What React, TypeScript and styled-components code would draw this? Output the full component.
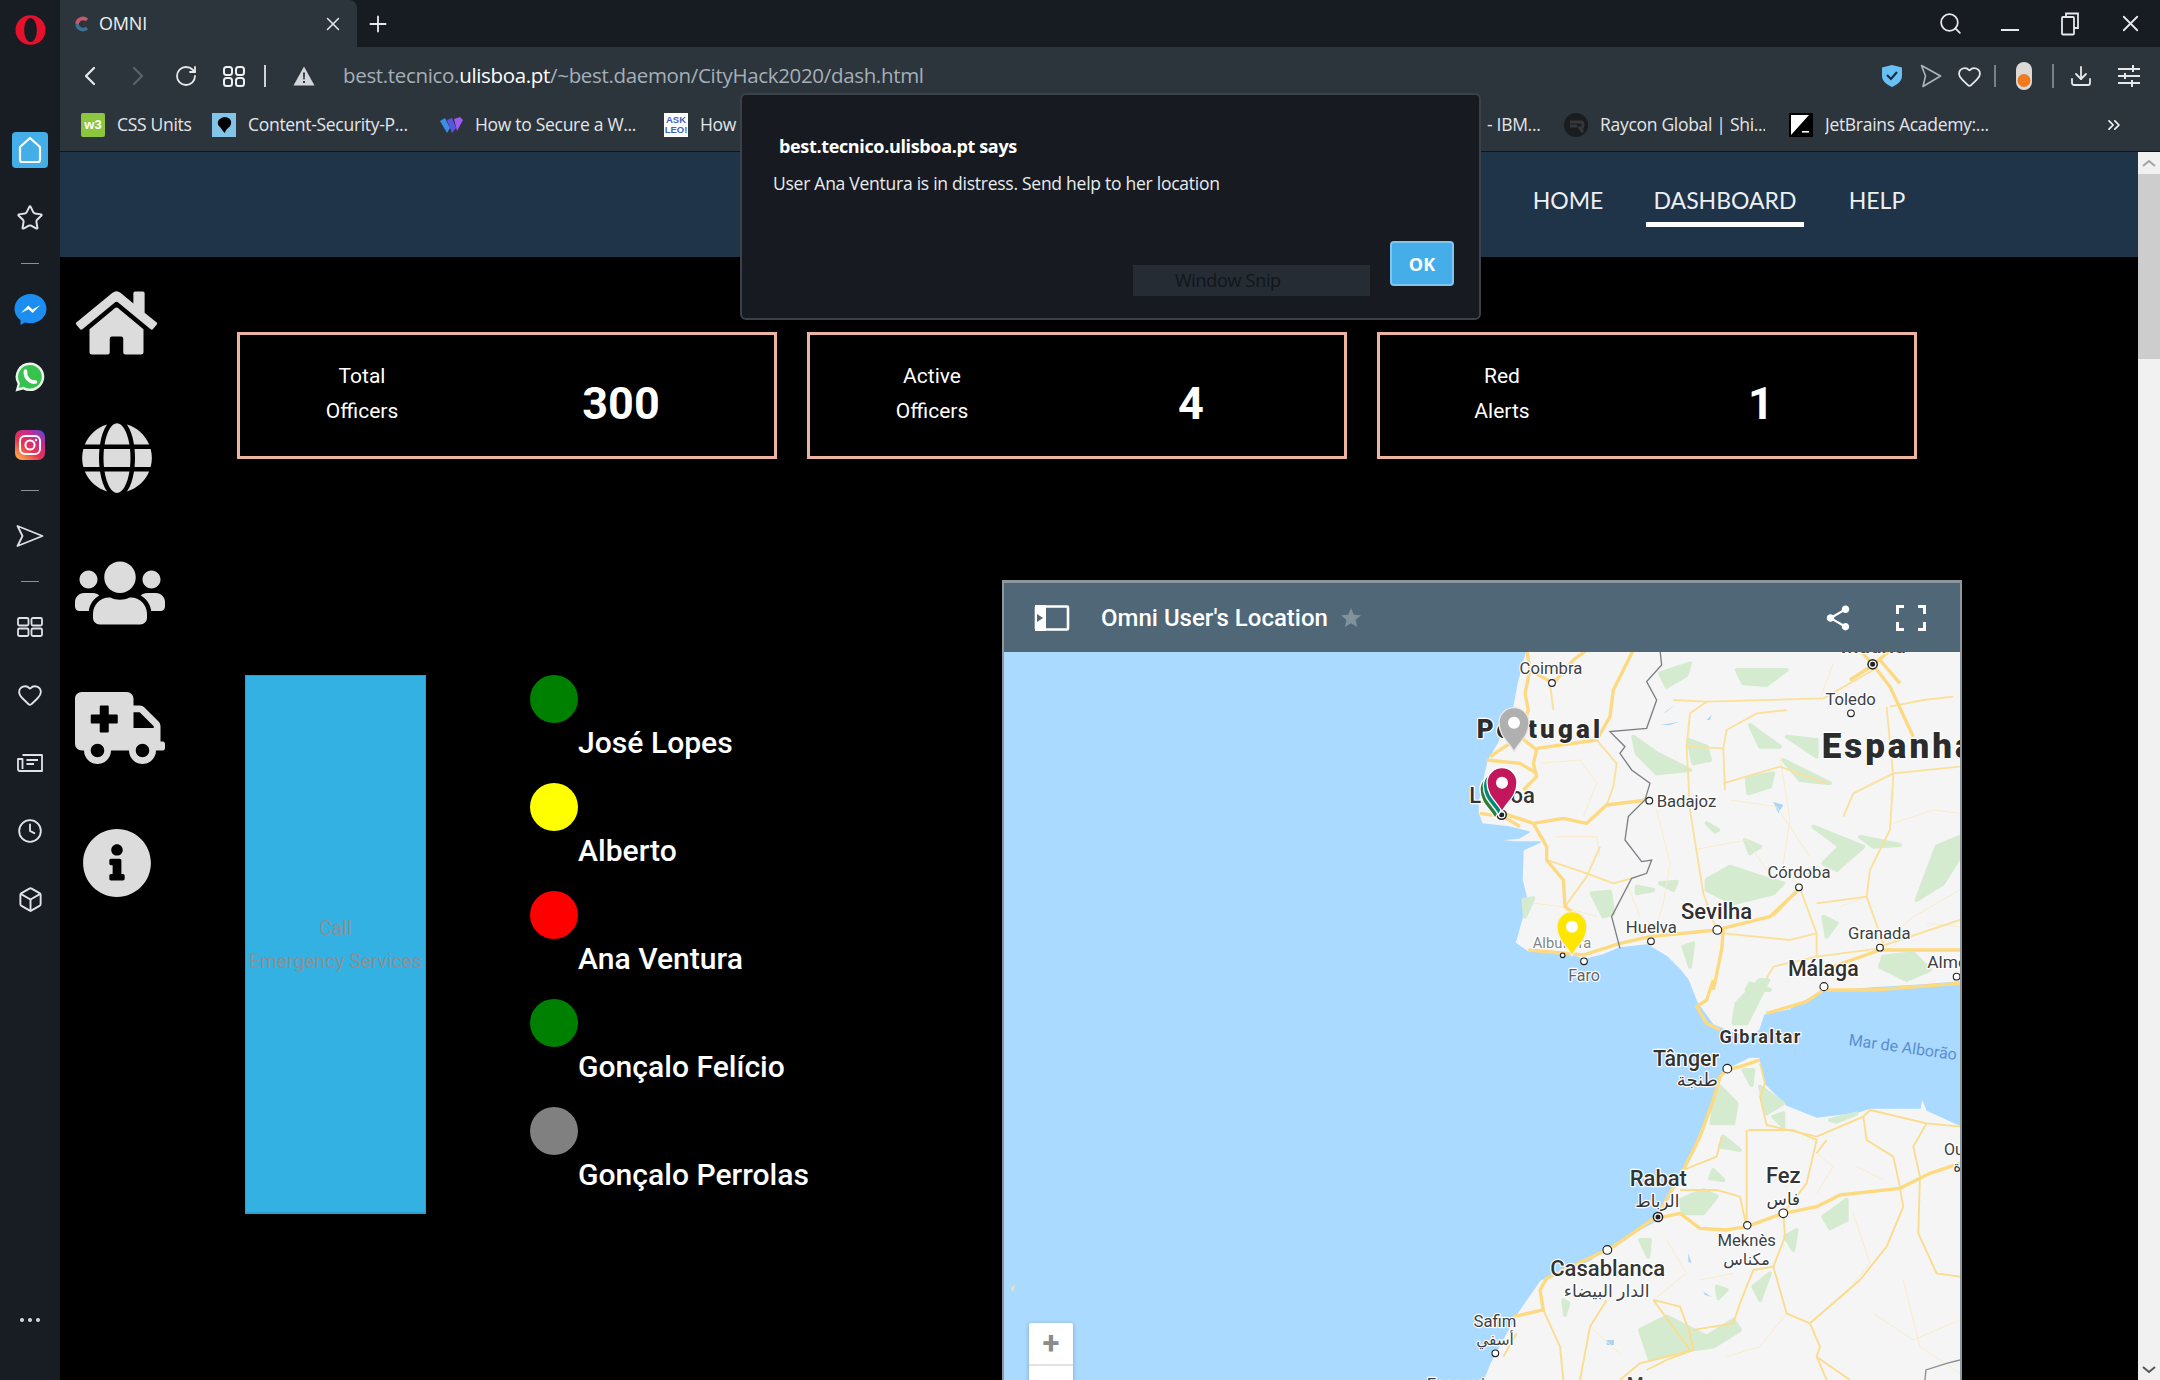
import React from "react";
import styled, { createGlobalStyle } from "styled-components";
import { ChevronLeft, ChevronRight, ChevronsRight, RotateCw, Search, X, Plus, Star, Heart, Clock, Box, Download } from "lucide-react";
import { FaHome, FaGlobe, FaUsers, FaAmbulance, FaInfoCircle } from "react-icons/fa";
import { MdShare, MdStar } from "react-icons/md";

const Global = createGlobalStyle`
  html, body { margin: 0; padding: 0; background: #000; overflow: hidden; }
  * { box-sizing: border-box; }
`;

const Shell = styled.div`
  width: 2160px; height: 1380px; display: flex; background: #000; overflow: hidden; position: relative;
  font-family: "Open Sans", "Liberation Sans", sans-serif;
`;
const SideRail = styled.aside`
  width: 60px; flex: none; background: #181c23; display: flex; flex-direction: column; align-items: center;
  padding-top: 15px; color: #dfe3e8;
`;
const LogoCell = styled.div`height: 101px; display: flex; align-items: flex-start;`;
const RailCell = styled.div`height: 68px; width: 60px; display: flex; align-items: center; justify-content: center;`;
const ActiveHome = styled.div`
  width: 36px; height: 36px; background: #44aee8; border-radius: 4px; display: flex; align-items: center; justify-content: center;
`;
const RailSep = styled.div`
  height: 23px; width: 60px; display: flex; align-items: center; justify-content: center;
  &::after { content: ""; width: 18px; height: 1px; background: #8a9098; }
`;
const RailDots = styled.div`
  margin-top: auto; margin-bottom: 58px; display: flex; gap: 4px;
  span { width: 4px; height: 4px; border-radius: 50%; background: #d8dce2; }
`;
const Main = styled.div`flex: 1; min-width: 0; display: flex; flex-direction: column;`;
const TabStrip = styled.div`height: 47px; background: #171b22; display: flex; align-items: stretch; color: #e8ebee; flex: none;`;
const ActiveTab = styled.div`
  width: 297px; background: #2c343c; border-top-right-radius: 8px; display: flex; align-items: center; padding-left: 15px; position: relative;
`;
const TabTitle = styled.span`font-size: 18px; margin-left: 10px; margin-top: -2px; color: #eef0f2; flex: 1; letter-spacing: -0.2px;`;
const TabClose = styled.span`display: flex; margin-right: 13px;`;
const Slot = styled.div<{ $w: number; $dim?: boolean }>`
  width: ${(p) => p.$w}px; flex: none; display: flex; align-items: center; justify-content: center;
  color: ${(p) => (p.$dim ? "#59626b" : "#e6e9ec")};
`;
const Push = styled.div`margin-left: auto; display: flex; align-items: stretch;`;
const AddressBar = styled.div`height: 58px; background: #2c343c; display: flex; align-items: stretch; padding-left: 6px; flex: none; padding-right: 5px;`;
const ToolSep = styled.div`
  width: 14px; flex: none; display: flex; align-items: center; justify-content: center; margin-right: 8px;
  &::after { content: ""; width: 2px; height: 22px; background: #cfd3d7; }
`;
const ThinSep = styled.div<{ $h: number }>`
  width: 12px; flex: none; display: flex; align-items: center; justify-content: center;
  &::after { content: ""; width: 2px; height: ${(p) => p.$h}px; background: #78808a; }
`;
const Url = styled.div`
  margin-left: 15px; font-size: 20.5px; letter-spacing: -0.33px; color: #a6afb8; align-self: center; white-space: nowrap; margin-top: -2px;
  b { font-weight: 400; color: #fff; }
`;
const BookmarkBar = styled.div`
  height: 47px; background: #2c343c; display: flex; align-items: center; flex: none; padding: 0 0 7px 21px; border-bottom: 1px solid #11151a; color: #e3e6e9; position: relative;
`;
const Bookmark = styled.div<{ $text: number; $after: number }>`
  display: flex; align-items: center; flex: none; margin-right: ${(p) => p.$after}px;
  span { width: ${(p) => p.$text}px; margin-left: 12px; font-size: 17.5px; letter-spacing: -0.3px; white-space: nowrap; overflow: hidden; margin-top: -2px; }
`;
const Fav = styled.div<{ $bg: string }>`
  width: 24px; height: 24px; flex: none; background: ${(p) => p.$bg}; display: flex; align-items: center; justify-content: center; overflow: hidden;
`;
const W3 = styled(Fav)`color: #fff; font: 700 13px/1 "Liberation Sans", sans-serif; border-radius: 2px;`;
const AskLeo = styled(Fav)`color: #3f5fc4; font: 800 9.5px/10px "Liberation Sans", sans-serif; text-align: center;`;
const More = styled.div`position: absolute; left: 2044px; top: 10px; color: #f2f4f6; display: flex;`;

const Viewport = styled.div`flex: 1; display: flex; min-height: 0; overflow: hidden;`;
const Page = styled.div`flex: 1; min-width: 0; display: flex; flex-direction: column; background: #000;`;
const SiteHeader = styled.header`height: 105px; background: #1f3349; flex: none; display: flex; justify-content: flex-end; padding-right: 232px;`;
const NavItem = styled.a<{ $active?: boolean; $w: number; $after: number }>`
  width: ${(p) => p.$w}px; margin-right: ${(p) => p.$after}px; height: 75px; display: flex; align-items: center; justify-content: center;
  padding-top: 25px; font-family: "Lato", sans-serif; font-size: 23px; color: #edf0f2; white-space: nowrap;
  border-bottom: 5px solid ${(p) => (p.$active ? "#fff" : "transparent")};
`;
const Body = styled.div`flex: 1; display: flex; min-height: 0;`;
const IconColumn = styled.nav`width: 114px; flex: none; display: flex; flex-direction: column; color: #dcdcdc;`;
const IconCell = styled.div`height: 135px; display: flex; align-items: center; justify-content: center; &:first-child { margin-top: -2px; }`;
const Content = styled.div`flex: 1; min-width: 0; padding: 75px 0 0 63px;`;
const StatRow = styled.div`display: flex; gap: 30px;`;
const StatCard = styled.section`
  width: 540px; height: 127px; border: 3px solid #edb5a0; display: grid; grid-template-columns: 244px 274px; align-items: center; color: #fff;
`;
const StatLabel = styled.div`text-align: center; font-family: Roboto, sans-serif; font-size: 21px; line-height: 35px; margin-top: -3px;`;
const StatValue = styled.div`text-align: center; font-family: Roboto, sans-serif; font-weight: 700; font-size: 45px; margin-top: 16px;`;
const Lower = styled.div`display: flex; align-items: flex-start; margin-top: 121px; margin-left: 8px;`;
const CallBar = styled.button`
  width: 181px; height: 539px; margin-top: 95px; flex: none; background: #33b1e2; border: 1px solid #2b9fcd; border-bottom-width: 2px; padding: 2px 0 0; color: #8c9094;
  font-family: Roboto, sans-serif; font-size: 19.3px; line-height: 33px; text-align: center; white-space: nowrap;
`;
const Roster = styled.ul`
  list-style: none; margin: 95px 0 0 104px; padding: 0; width: 472px; flex: none; display: flex; flex-direction: column; gap: 20px;
`;
const Person = styled.li`display: block;`;
const Lamp = styled.div<{ $c: string }>`width: 48px; height: 48px; border-radius: 50%; background: ${(p) => p.$c};`;
const PersonName = styled.div`padding-left: 48px; font-family: Roboto, sans-serif; font-weight: 500; font-size: 30.1px; line-height: 40px; color: #fff;`;
const MapFrame = styled.section`
  width: 960px; height: 800px; flex: none; border: 2px solid #8d979c; border-top-width: 3px; border-bottom: 0; position: relative; overflow: hidden; background: #aadaff;
`;
const MapBar = styled.div`
  height: 69px; background: #4f6777; display: flex; align-items: center; color: #fff; padding-left: 30px;
`;
const MapTitle = styled.h2`margin: 0 0 0 31px; font-family: Roboto, sans-serif; font-weight: 500; font-size: 24px; color: #fff;`;
const MapActions = styled.div`margin-left: auto; display: flex; align-items: center; gap: 43px; padding-right: 34px;`;
const MapSvg = styled.svg`display: block; width: 956px; height: 728px;`;
const ZoomBox = styled.div`
  position: absolute; left: 25px; top: 740px; width: 44px; height: 100px; background: #fff; border-radius: 2px; box-shadow: 0 1px 4px rgba(0,0,0,.25);
  display: flex; flex-direction: column; align-items: center; color: #8a8a8a;
  span { height: 43px; width: 100%; border-bottom: 2px solid #e2e2e2; text-align: center; font: 700 31px/42px Roboto, sans-serif; }
`;
const MapText = styled.text<{ $size: number; $w?: number; $c?: string; $ls?: number }>`
  font-family: Roboto, "DejaVu Sans", sans-serif; font-size: ${(p) => p.$size}px; font-weight: ${(p) => p.$w ?? 400};
  fill: ${(p) => p.$c ?? "#3c4043"}; letter-spacing: ${(p) => p.$ls ?? 0}px;
  paint-order: stroke; stroke: #fff; stroke-width: 7px; stroke-linejoin: round;
`;
const SeaText = styled(MapText)`stroke: none;`;
const Scrollbar = styled.div`width: 22px; flex: none; background: #f1f1f1; display: flex; flex-direction: column; align-items: center; color: #555;`;
const ScrollUp = styled.div`height: 22px; width: 100%; display: flex; align-items: center; justify-content: center; color: #a3a3a3;`;
const ScrollThumb = styled.div`height: 185px; width: 100%; background: #cdcdcd;`;
const ScrollDown = styled.div`margin-top: auto; height: 20px; display: flex; align-items: center; justify-content: center;`;
const Dialog = styled.div`
  position: absolute; left: 740px; top: 93px; width: 741px; height: 227px; background: #171b21; border: 2px solid #3b4148; border-radius: 6px; color: #f1f3f5;
  padding: 39px 0 0 31px;
`;
const DialogTitle = styled.div`font-size: 18px; font-weight: 700; padding-left: 6px; color: #fff; letter-spacing: -0.35px; line-height: 25px;`;
const DialogText = styled.div`font-size: 17.5px; margin-top: 11px; line-height: 26px; letter-spacing: -0.26px; color: #e9ecef;`;
const OkButton = styled.button`
  position: absolute; left: 648px; top: 146px; width: 64px; height: 45px; background: #45aee8; border: 2px solid #7cc6ef; border-radius: 4px; color: #fff;
  font: 700 18px "Open Sans", sans-serif; padding: 0;
`;
const SnipTip = styled.div`
  position: absolute; left: 391px; top: 170px; width: 237px; height: 31px; background: #252c34; color: #12161b; font-size: 18px; padding-left: 42px; line-height: 31px; letter-spacing: -0.3px;
`;

const sz = (w: number, h: number) => ({ width: w, height: h });
const HomeIco = styled(FaHome)`width: 81px; height: 72px; margin-left: -2px;`;
const GlobeIco = styled(FaGlobe)`width: 70px; height: 72px; margin-left: -1px;`;
const UsersIco = styled(FaUsers)`width: 90px; height: 72px; margin-left: 6px;`;
const AmbIco = styled(FaAmbulance)`width: 90px; height: 72px; margin-left: 6px;`;
const InfoIco = styled(FaInfoCircle)`width: 70px; height: 72px; margin-left: -1px;`;

const Pin = ({ x, y, fill, edge = "#fff" }: { x: number; y: number; fill: string; edge?: string }) => (
  <g transform={`translate(${x} ${y})`}>
    <path d="M0 87C-14 58-45 42-45 0A45 45 0 1 1 45 0C45 42 14 58 0 87Z" fill={fill} stroke={edge} strokeWidth="4" />
    <circle r="18" fill="#fff" />
  </g>
);
const City = ({ x, y, r = 10 }: { x: number; y: number; r?: number }) => (
  <circle cx={x} cy={y} r={r} fill="#fff" stroke="#222" strokeWidth="3.4" />
);
const Capital = ({ x, y }: { x: number; y: number }) => (
  <g>
    <circle cx={x} cy={y} r="16" fill="#222" />
    <circle cx={x} cy={y} r="11.5" fill="#fff" />
    <circle cx={x} cy={y} r="7.5" fill="#222" />
  </g>
);

const ocean =
  "M0 0L521 0L513 31L508 58L493 91L483 108L478 130L474 150L474 161L478 172L505 175L525 180L515 186L493 188L510 190L536 190L519 198L518 228L523 248L511 291L524 300L556 300L568 303L579 308L599 303L616 296L643 293L663 305L676 318L684 328L693 351L709 373L726 380L746 386L756 378L761 363L786 358L803 348L819 340L869 336L919 333L956 330L956 473L923 458L918 445L916 456L866 456L853 460L813 465L783 453L761 431L756 405L745 405L723 416L714 428L703 461L689 495L676 525L653 568L616 588L586 608L536 628L513 661L486 711L479 728L0 728Z";

const greensA = [
  "580,260 650,310 750,360 650,370 590,310", "800,690 870,650 960,680 1030,700 1000,730 880,760 800,720",
  "1120,530 1270,590 1190,660 1150,640 1200,590", "1560,560 1490,590 1430,750 1510,700 1560,620",
  "920,385 1000,370 990,410 925,430", "745,270 800,290 810,330 760,340", "660,70 750,40 740,75 680,110",
  "890,60 1040,60 980,105 910,100", "915,570 960,590 930,610", "455,730 510,725 520,790 490,800",
  "1030,330 1170,400 1080,390", "930,225 1020,290 960,290", "1040,260 1130,270 1130,320", "1150,800 1190,820 1160,860",
  "730,890 760,880 750,950", "1330,920 1420,910 1470,960 1400,990 1320,950", "930,1000 990,1020 920,1020",
  "1260,560 1380,585 1300,590", "250,750 280,745 255,800", "590,710 640,720 590,730", "660,700 710,695 700,720", "800,520 835,540 825,545",
];
const greensB = [
  "840,320 890,370 880,430 815,430 820,380", "900,60 960,0 985,0 920,130 880,130 890,70", "720,660 790,630 830,650 790,700 730,700",
  "600,1050 680,1010 800,1070 880,1020 900,1050 820,1100 740,1110 630,1140", "1150,710 1220,660 1220,720 1170,745",
  "1035,770 1070,750 1060,810", "910,270 940,270 935,315", "960,320 1030,370 980,400", "820,570 850,600 810,595",
  "940,920 990,880 960,960", "1000,410 1030,400 1030,440", "600,780 630,780 625,830", "830,920 860,930 835,955",
  "370,960 385,970 375,1005", "1170,420 1250,400 1190,425", "850,470 900,510 840,500",
];
const majorA = [
  "M190 490L280 520L370 505L440 520L500 465L620 450", "M280 520L320 590L320 630L370 690L375 770L400 790",
  "M265 900L430 915L540 880L630 860L830 840L990 800L1080 715", "M850 840L845 900L820 1020",
  "M260 0L270 60L255 130L265 180L240 260L290 300L280 340L290 380L250 420", "M580 0L520 120L510 200L470 270L290 295",
  "M1300 45L1350 110L1420 260", "M1300 45L1230 90", "M1300 45L1260 0", "M1300 45L1350 0", "M1320 30L1380 100",
  "M140 330L240 340L290 370", "M1090 970L1150 960L1320 900L1560 900", "M270 60L340 100L400 30L440 0", "M240 260L150 320", "M120 490L190 500L240 530",
];
const minorA = [
  "M830 840L790 730L750 480L740 290L750 190L800 155L1150 145L1300 60", "M1340 170L1360 380L1350 540L1290 660L1280 740L1330 880",
  "M1080 715L1130 850L1130 920", "M1320 895L1130 920L1000 950", "M1320 890L1560 810", "M740 290L850 295L860 240L950 190L1040 180",
  "M850 295L855 420", "M470 270L530 340L520 410L500 465", "M320 630L440 670L520 700L575 685", "M480 590L440 680L375 770",
  "M1240 430L1210 500", "M1240 430L1360 370L1560 350", "M1000 950L960 1020", "M1080 715L1000 800", "M1540 140L1450 150L1350 170",
  "M330 100L340 180", "M700 150L800 155", "M1130 850L1050 870L850 850", "M1280 740L1130 760", "M850 400L1020 350L1160 400",
];
const faintA = [
  "M300 340L420 330L470 400L430 500", "M350 560L470 560L480 620", "M650 480L690 640L670 760L640 860", "M1020 320L1050 510L1030 640L1080 715",
  "M870 450L1010 470L1110 620", "M760 600L920 570L1000 690", "M1180 40L1140 145", "M1420 260L1560 300", "M1360 520L1480 480L1560 490",
  "M1200 770L1280 740", "M1330 880L1420 800L1560 720", "M560 700L600 800", "M280 760L370 770L470 800", "M1460 820L1560 830",
];
const majorB = [
  "M860 270L840 290L820 360L780 470L730 570L650 710L520 800L320 895L300 930L310 990L220 1010",
  "M650 715L720 700L780 745L860 750L920 740L1030 700L1130 680L1200 645L1380 625L1470 580L1560 550",
  "M820 0L800 60L770 80L800 130L840 150", "M980 100L1100 65L1150 30L1300 30L1560 10", "M860 270L900 260L960 240",
];
const minorB = [
  "M720 630L830 630L900 650L920 740", "M920 450L920 600L920 740", "M925 450L1060 450L1130 480L1100 610L1030 700",
  "M960 250L975 310L960 350L980 435L1130 470L1270 410L1290 390L1460 430L1560 440", "M1030 700L1035 770L1000 860L1020 930L1040 1000L1110 1030L1140 1100L1130 1130L1160 1200",
  "M1110 1030L1260 900L1340 800L1390 680L1380 625", "M1440 590L1435 760L1490 880L1560 890", "M640 960L720 980L750 1060L760 1110L680 1140L620 1170",
  "M640 960L750 1110", "M500 960L450 1040L420 1200", "M310 990L360 1100L370 1200", "M760 1050L880 1030L900 970L940 870L1000 860",
  "M190 1130L230 1060", "M1270 410L1280 480L1360 530L1380 620", "M1460 430L1420 500L1440 590", "M730 570L830 530L845 470", "M540 1200L600 1150L760 1110",
  "M1160 480L1130 520", "M1130 1130L1230 1200",
];
const faintB = [
  "M680 780L740 880L640 960", "M1130 520L1180 560L1130 640", "M1250 560L1330 600", "M1240 700L1290 850L1200 960", "M1300 1000L1420 1080L1560 1020",
  "M780 900L880 880", "M1040 1000L960 1100L860 1130", "M1390 900L1440 1100L1560 1180", "M450 1040L540 1120",
];

const MapArt = () => (
  <MapSvg viewBox="0 0 956 728">
    <rect width="956" height="728" fill="#f5f5f5" />
    <path d={ocean} fill="#aadaff" stroke="#aadaff" strokeWidth="1.5" strokeLinejoin="round" />
    <path d="M7 636L11 632L9 640Z" fill="#f3e3a8" />
    <g transform="translate(436 -2) scale(.3333)">
      {greensA.map((p) => <polygon key={p} points={p} fill="#d5ebd0" stroke="#d5ebd0" strokeWidth="12" strokeLinejoin="round" />)}
      <path d="M1000 455L1030 465L1015 490ZM670 190L705 165L680 185ZM660 225L720 215L690 225ZM800 210L815 195L810 210Z" fill="#a9d6f7" />
      {faintA.map((d) => <path key={d} d={d} fill="none" stroke="#f8ecca" strokeWidth="3" strokeLinejoin="round" />)}
      {minorA.map((d) => <path key={d} d={d} fill="none" stroke="#fbe09a" strokeWidth="5.5" strokeLinejoin="round" />)}
      {majorA.map((d) => <path key={d} d={d} fill="none" stroke="#fdd97f" strokeWidth="10" strokeLinejoin="round" />)}
      <path d="M660 0L665 45L620 95L650 150L620 235L510 245L555 290L540 310L575 360L630 400L615 450L565 500L555 570L605 635L635 630L620 670L575 685L515 800L540 895" fill="none" stroke="#7b7f84" strokeWidth="4" />
    </g>
    <g transform="translate(436 328) scale(.3333)">
      {greensB.map((p) => <polygon key={p} points={p} fill="#d5ebd0" stroke="#d5ebd0" strokeWidth="12" strokeLinejoin="round" />)}
      <path d="M500 1080H522V1095H500ZM745 820L755 850L745 845ZM790 935L815 950L795 945Z" fill="#a9d6f7" />
      {faintB.map((d) => <path key={d} d={d} fill="none" stroke="#f8ecca" strokeWidth="3" strokeLinejoin="round" />)}
      {minorB.map((d) => <path key={d} d={d} fill="none" stroke="#fbdc8c" strokeWidth="5.5" strokeLinejoin="round" />)}
      {majorB.map((d) => <path key={d} d={d} fill="none" stroke="#fdd97f" strokeWidth="10" strokeLinejoin="round" />)}
      <path d="M1455 1200L1458 1170L1520 1150L1560 1140" fill="none" stroke="#8a8d91" strokeWidth="4" />
    </g>
    <g transform="translate(436 -2) scale(.3333)">
      <MapText x="1300" y="8" textAnchor="middle" $size={62} $w={500}>Madrid</MapText>
      <MapText x="333" y="72" textAnchor="middle" $size={50}>Coimbra</MapText>
      <MapText x="110" y="265" $size={78} $w={900} $ls={9.5} $c="#2c2c2c">Portugal</MapText>
      <MapText x="1145" y="325" $size={105} $w={900} $ls={9} $c="#2c2c2c">Espanha</MapText>
      <MapText x="88" y="460" $size={66} $w={500} $c="#333">Lisboa</MapText>
      <MapText x="1232" y="165" textAnchor="middle" $size={50}>Toledo</MapText>
      <MapText x="650" y="470" $size={50}>Badajoz</MapText>
      <MapText x="1077" y="685" textAnchor="middle" $size={50}>Córdoba</MapText>
      <MapText x="830" y="808" textAnchor="middle" $size={66} $w={500} $c="#2f2f2f">Sevilha</MapText>
      <MapText x="634" y="848" textAnchor="middle" $size={50}>Huelva</MapText>
      <MapText x="1318" y="868" textAnchor="middle" $size={50}>Granada</MapText>
      <MapText x="366" y="895" textAnchor="middle" $size={44} $c="#80868b">Albufeira</MapText>
      <MapText x="432" y="993" textAnchor="middle" $size={48} $c="#5f6368">Faro</MapText>
      <MapText x="1150" y="978" textAnchor="middle" $size={64} $w={500} $c="#2f2f2f">Málaga</MapText>
      <MapText x="1462" y="955" $size={52}>Almería</MapText>
      <Capital x={1298} y={43} />
      <Capital x={185} y={494} />
      <City x={336} y={99} />
      <City x={1233} y={190} />
      <City x={628} y={452} />
      <City x={1077} y={712} />
      <City x={832} y={840} r={13} />
      <City x={633} y={874} />
      <City x={1320} y={893} />
      <City x={368} y={916} r={7} />
      <City x={432} y={934} />
      <City x={1152} y={1010} r={12} />
      <City x={1550} y={980} />
      <Pin x={222} y={218} fill="#b0b0b0" edge="#e8e8e8" />
      <Pin x={165} y={418} fill="#2e7d32" />
      <Pin x={175} y={408} fill="#00897b" />
      <Pin x={186} y={398} fill="#c2185b" />
      <Pin x={396} y={830} fill="#ffe600" edge="#f0f0f0" />
    </g>
    <g transform="translate(436 328) scale(.3333)">
      <MapText x="962" y="188" textAnchor="middle" $size={54} $w={700} $ls={4} $c="#333">Gibraltar</MapText>
      <MapText x="738" y="258" textAnchor="middle" $size={64} $w={500} $c="#333">Tânger</MapText>
      <MapText x="772" y="318" textAnchor="middle" $size={54} $c="#333">طنجة</MapText>
      <SeaText x="1225" y="195" $size={48} $c="#5b8ed1" transform="rotate(8 1225 195)">Mar de Alborão</SeaText>
      <MapText x="655" y="618" textAnchor="middle" $size={66} $w={500} $c="#333">Rabat</MapText>
      <MapText x="652" y="680" textAnchor="middle" $size={50} $c="#333">الرباط</MapText>
      <MapText x="1030" y="608" textAnchor="middle" $size={66} $w={500} $c="#333">Fez</MapText>
      <MapText x="1030" y="675" textAnchor="middle" $size={50} $c="#333">فاس</MapText>
      <MapText x="920" y="797" textAnchor="middle" $size={50}>Meknès</MapText>
      <MapText x="920" y="855" textAnchor="middle" $size={48}>مكناس</MapText>
      <MapText x="503" y="888" textAnchor="middle" $size={66} $w={500} $c="#333">Casablanca</MapText>
      <MapText x="500" y="950" textAnchor="middle" $size={52}>الدار البيضاء</MapText>
      <MapText x="165" y="1040" textAnchor="middle" $size={50}>Safim</MapText>
      <MapText x="165" y="1095" textAnchor="middle" $size={46}>أسفي</MapText>
      <MapText x="1512" y="525" $size={48}>Oujda</MapText>
      <MapText x="1540" y="575" $size={46}>وجدة</MapText>
      <MapText x="560" y="1237" $size={58} $w={500}>Marrocos</MapText>
      <MapText x="-40" y="1230" $size={50}>Essaouira</MapText>
      <Capital x={654} y={711} />
      <City x={862} y={266} r={13} />
      <City x={502} y={810} r={13} />
      <City x={1030} y={700} r={13} />
      <City x={922} y={736} r={11} />
      <City x={166} y={1120} r={10} />
    </g>
  </MapSvg>
);

const people = [
  { name: "José Lopes", c: "#008000" },
  { name: "Alberto", c: "#ffff00" },
  { name: "Ana Ventura", c: "#ff0000" },
  { name: "Gonçalo Felício", c: "#008000" },
  { name: "Gonçalo Perrolas", c: "#808080" },
];
const stats = [
  { a: "Total", b: "Officers", v: "300" },
  { a: "Active", b: "Officers", v: "4" },
  { a: "Red", b: "Alerts", v: "1" },
];

const OperaLogo = () => (
  <svg {...sz(31, 30)} viewBox="0 0 31 30">
    <ellipse cx="15.5" cy="15" rx="15" ry="14.8" fill="#e8112d" />
    <ellipse cx="15.5" cy="15" rx="6.4" ry="12" fill="#171b22" />
  </svg>
);
const RailSend = () => (
  <svg {...sz(28, 24)} viewBox="0 0 28 24" fill="none" stroke="currentColor" strokeWidth="1.8" strokeLinejoin="round">
    <path d="M1.5 2L26.5 12L1.5 22L6.5 12Z" />
  </svg>
);
const RailGrid = () => (
  <svg {...sz(26, 20)} viewBox="0 0 26 20" fill="none" stroke="currentColor" strokeWidth="1.8">
    <rect x="1" y="1" width="10.5" height="7.5" rx="1.5" /><rect x="14.5" y="1" width="10.5" height="7.5" rx="1.5" />
    <rect x="1" y="11.5" width="10.5" height="7.5" rx="1.5" /><rect x="14.5" y="11.5" width="10.5" height="7.5" rx="1.5" />
  </svg>
);
const RailNews = () => (
  <svg {...sz(26, 20)} viewBox="0 0 26 20" fill="none" stroke="currentColor" strokeWidth="1.8" strokeLinejoin="round">
    <path d="M5.5 2H25V18H3Q1 18 1 16V6H5.5V16" />
    <path d="M9.5 7H21M9.5 11H17" />
  </svg>
);
const Messenger = () => (
  <svg {...sz(33, 33)} viewBox="0 0 31 31">
    <path d="M15.5 1C7.2 1 .5 7.1.5 14.8c0 4.4 2.2 8.2 5.6 10.7V30l4.3-2.4c1.6.5 3.3.7 5.1.7 8.3 0 15-6.1 15-13.6S23.8 1 15.5 1z" fill="#1c8ef2" />
    <path d="M6.5 18.8l7-7 3.8 3.6 7.2-3.8-7 7.2-3.8-3.6z" fill="#fff" />
  </svg>
);
const WhatsApp = () => (
  <svg {...sz(32, 32)} viewBox="0 0 32 32">
    <path d="M16 1.5A14.3 14.3 0 0 0 3.6 23L1.5 30.5 9.2 28.4A14.3 14.3 0 1 0 16 1.5Z" fill="#e9f3ea" />
    <path d="M16 4A11.8 11.8 0 0 0 6 22.2L4.8 27 9.7 25.8A11.8 11.8 0 1 0 16 4Z" fill="#35c24f" />
    <path d="M11.5 10C10.5 16 15.5 21.5 21.5 21" fill="none" stroke="#fff" strokeWidth="3.6" strokeLinecap="round" />
  </svg>
);
const Instagram = () => (
  <svg {...sz(30, 30)} viewBox="0 0 30 30">
    <defs>
      <linearGradient id="ig" x1="0.1" y1="1" x2="0.9" y2="0">
        <stop offset="0" stopColor="#fdb64b" /><stop offset=".4" stopColor="#e8334f" /><stop offset=".75" stopColor="#c42a96" /><stop offset="1" stopColor="#5a4bd1" />
      </linearGradient>
    </defs>
    <rect width="30" height="30" rx="7" fill="url(#ig)" />
    <rect x="5" y="6" width="20" height="18" rx="5" fill="none" stroke="#fff" strokeWidth="2" />
    <circle cx="15" cy="15" r="4.6" fill="none" stroke="#fff" strokeWidth="2" />
    <circle cx="21" cy="10" r="1.2" fill="#fff" />
  </svg>
);
const RailHouse = () => (
  <svg {...sz(24, 28)} viewBox="0 0 24 28" fill="none" stroke="#fff" strokeWidth="2.2" strokeLinejoin="round">
    <path d="M12 2L22 11V24Q22 26 20 26H4Q2 26 2 24V11Z" />
  </svg>
);
const Favicon = () => (
  <svg {...sz(14, 16)} viewBox="0 0 14 16" fill="none" strokeWidth="3.6">
    <path d="M12 4A6 6 0 0 0 2 8" stroke="#c45a6b" />
    <path d="M2 8A6 6 0 0 0 12 12" stroke="#3f6f92" />
  </svg>
);
const Grid4 = () => (
  <svg {...sz(22, 21)} viewBox="0 0 22 21" fill="none" stroke="#eef0f2" strokeWidth="2">
    <rect x="1" y="1" width="8" height="8" rx="2.5" /><rect x="13" y="1" width="8" height="8" rx="2.5" />
    <rect x="1" y="12" width="8" height="8" rx="2.5" /><rect x="13" y="12" width="8" height="8" rx="2.5" />
  </svg>
);
const Warn = () => (
  <svg {...sz(22, 20)} viewBox="0 0 22 20">
    <path d="M11 .5L21.5 19.5H.5Z" fill="#d2d6da" />
    <path d="M10 6.5h2l-.3 7h-1.4zM10 15h2v2h-2z" fill="#2c343c" />
  </svg>
);
const Minimize = () => <svg {...sz(18, 20)} viewBox="0 0 18 20"><rect y="15" width="18" height="2" fill="#e6e9ec" /></svg>;
const Restore = () => (
  <svg {...sz(18, 24)} viewBox="0 0 18 24" fill="none" stroke="#e6e9ec" strokeWidth="1.8">
    <path d="M5 5V1.5H17V16H13" /><rect x="1" y="5" width="12" height="17.5" rx="1" />
  </svg>
);
const Shield = () => (
  <svg {...sz(20, 22)} viewBox="0 0 20 22">
    <path d="M10 0L20 2.5V11C20 17 14 20 10 22C6 20 0 17 0 11V2.5Z" fill="#69c0f5" />
    <path d="M5 10L9 14L15 7" fill="none" stroke="#1d2a44" strokeWidth="2.2" />
  </svg>
);
const SendSmall = () => (
  <svg {...sz(22, 24)} viewBox="0 0 22 24" fill="none" stroke="#aeb4ba" strokeWidth="1.6" strokeLinejoin="round">
    <path d="M1.5 1.5L20.5 12L3 22.5L5.5 12Z" />
  </svg>
);
const Pill = () => (
  <svg {...sz(16, 28)} viewBox="0 0 16 28">
    <rect width="16" height="28" rx="8" fill="#dcdad6" />
    <circle cx="8" cy="18.5" r="6.5" fill="#f07a1e" />
  </svg>
);
const Sliders = () => (
  <svg {...sz(22, 24)} viewBox="0 0 22 24" stroke="#e6e9ec" strokeWidth="2" fill="none">
    <path d="M0 5H22M0 12H22M0 19H22M15 1V8M7 9V15M14 16V23" />
  </svg>
);
const SecurityFav = () => (
  <svg {...sz(24, 28)} viewBox="0 0 24 28">
    <rect width="24" height="28" fill="#83c5e8" />
    <path d="M12 6C17 6 20 9 19 13C18 17 14 17 13 22C10 20 10 18 8 16C5 14 4 8 12 6Z" fill="#000" />
  </svg>
);
const WFav = () => (
  <svg {...sz(23, 18)} viewBox="0 0 23 18">
    <path d="M0 5L5 2L10 12L7 17Z" fill="#3f8be8" />
    <path d="M7 4L12 2L16 12L12 17Z" fill="#5a55e0" />
    <path d="M14 3L20 1L23 4L17 15Z" fill="#9b5cf0" />
  </svg>
);
const RayconFav = () => (
  <svg {...sz(24, 24)} viewBox="0 0 24 24">
    <circle cx="12" cy="12" r="12" fill="#1a1c1e" />
    <path d="M6 9H17Q19 9 19 12T16 15L19 19M6 13H13" fill="none" stroke="#34383c" strokeWidth="3" />
  </svg>
);
const JetFav = () => (
  <svg {...sz(24, 24)} viewBox="0 0 24 24">
    <rect width="24" height="24" fill="#000" />
    <path d="M2 2H20L2 22Z" fill="#fff" />
    <rect x="13" y="18" width="7" height="1.6" fill="#fff" />
  </svg>
);
const PanelToggle = () => (
  <svg {...sz(36, 26)} viewBox="0 0 36 26" fill="none">
    <rect x="2" y="1.5" width="32" height="23" rx="1" stroke="#fff" strokeWidth="2.6" />
    <rect x="1" y="0" width="11" height="26" fill="#fff" />
    <path d="M3 9L9 13L3 17Z" fill="#4f6777" />
  </svg>
);
const Fullscreen = () => (
  <svg {...sz(30, 26)} viewBox="0 0 30 26" fill="none" stroke="#fff" strokeWidth="3">
    <path d="M1.5 9V1.5H8M22 1.5H28.5V9M1.5 17V24.5H8M22 24.5H28.5V17" />
  </svg>
);
const TinyChevron = ({ up }: { up?: boolean }) => (
  <svg {...sz(14, 8)} viewBox="0 0 14 8" fill="none" stroke="currentColor" strokeWidth="2">
    <path d={up ? "M1 7L7 2L13 7" : "M1 1L7 6L13 1"} />
  </svg>
);
const TitleStar = styled(MdStar)`margin-left: 11px;`;

export default function App() {
  return (
    <Shell>
      <Global />
      <SideRail>
        <LogoCell><OperaLogo /></LogoCell>
        <RailCell><ActiveHome><RailHouse /></ActiveHome></RailCell>
        <RailCell><Star size={28} strokeWidth={1.7} /></RailCell>
        <RailSep />
        <RailCell><Messenger /></RailCell>
        <RailCell><WhatsApp /></RailCell>
        <RailCell><Instagram /></RailCell>
        <RailSep />
        <RailCell><RailSend /></RailCell>
        <RailSep />
        <RailCell><RailGrid /></RailCell>
        <RailCell><Heart size={26} strokeWidth={1.7} /></RailCell>
        <RailCell><RailNews /></RailCell>
        <RailCell><Clock size={26} strokeWidth={1.7} /></RailCell>
        <RailCell><Box size={27} strokeWidth={1.7} /></RailCell>
        <RailDots><span /><span /><span /></RailDots>
      </SideRail>
      <Main>
        <TabStrip>
          <ActiveTab>
            <Favicon />
            <TabTitle>OMNI</TabTitle>
            <TabClose><X size={22} strokeWidth={1.6} /></TabClose>
          </ActiveTab>
          <Slot $w={42}><Plus size={26} strokeWidth={1.7} /></Slot>
          <Push>
            <Slot $w={60}><Search size={25} strokeWidth={1.7} /></Slot>
            <Slot $w={60}><Minimize /></Slot>
            <Slot $w={60}><Restore /></Slot>
            <Slot $w={60}><X size={27} strokeWidth={1.6} /></Slot>
          </Push>
        </TabStrip>
        <AddressBar>
          <Slot $w={48}><ChevronLeft size={32} strokeWidth={1.7} /></Slot>
          <Slot $w={48} $dim><ChevronRight size={32} strokeWidth={1.7} /></Slot>
          <Slot $w={48}><RotateCw size={24} strokeWidth={1.8} /></Slot>
          <Slot $w={48}><Grid4 /></Slot>
          <ToolSep />
          <Slot $w={48}><Warn /></Slot>
          <Url>best.tecnico.<b>ulisboa.pt</b>/~best.daemon/CityHack2020/dash.html</Url>
          <Push>
            <Slot $w={39}><Shield /></Slot>
            <Slot $w={39}><SendSmall /></Slot>
            <Slot $w={39}><Heart size={25} strokeWidth={1.7} color="#e6e9ec" /></Slot>
            <ThinSep $h={22} />
            <Slot $w={46}><Pill /></Slot>
            <ThinSep $h={24} />
            <Slot $w={44}><Download size={24} strokeWidth={1.8} /></Slot>
            <Slot $w={52}><Sliders /></Slot>
          </Push>
        </AddressBar>
        <BookmarkBar>
          <Bookmark $text={76} $after={19}><W3 $bg="#8cc63f">w3</W3><span>CSS Units</span></Bookmark>
          <Bookmark $text={164} $after={27}><Fav $bg="transparent"><SecurityFav /></Fav><span>Content-Security-P...</span></Bookmark>
          <Bookmark $text={165} $after={24}><Fav $bg="transparent"><WFav /></Fav><span>How to Secure a W...</span></Bookmark>
          <Bookmark $text={775} $after={0}><AskLeo $bg="#fff">ASK<br />LEO!</AskLeo><span>How to Fix It</span></Bookmark>
          <Bookmark $text={55} $after={22}><span>- IBM...</span></Bookmark>
          <Bookmark $text={165} $after={24}><Fav $bg="transparent"><RayconFav /></Fav><span>Raycon Global | Shi...</span></Bookmark>
          <Bookmark $text={166} $after={0}><Fav $bg="transparent"><JetFav /></Fav><span>JetBrains Academy:...</span></Bookmark>
          <More><ChevronsRight size={20} strokeWidth={2} /></More>
        </BookmarkBar>
        <Viewport>
          <Page>
            <SiteHeader>
              <NavItem $w={68} $after={44} as="a">HOME</NavItem>
              <NavItem $w={158} $after={44} $active as="a">DASHBOARD</NavItem>
              <NavItem $w={58} $after={0} as="a">HELP</NavItem>
            </SiteHeader>
            <Body>
              <IconColumn>
                <IconCell><HomeIco /></IconCell>
                <IconCell><GlobeIco /></IconCell>
                <IconCell><UsersIco /></IconCell>
                <IconCell><AmbIco /></IconCell>
                <IconCell><InfoIco /></IconCell>
              </IconColumn>
              <Content>
                <StatRow>
                  {stats.map((s) => (
                    <StatCard key={s.a}>
                      <StatLabel>{s.a}<br />{s.b}</StatLabel>
                      <StatValue>{s.v}</StatValue>
                    </StatCard>
                  ))}
                </StatRow>
                <Lower>
                  <CallBar>Call<br />Emergency Services</CallBar>
                  <Roster>
                    {people.map((p) => (
                      <Person key={p.name}>
                        <Lamp $c={p.c} />
                        <PersonName>{p.name}</PersonName>
                      </Person>
                    ))}
                  </Roster>
                  <MapFrame>
                    <MapBar>
                      <PanelToggle />
                      <MapTitle>Omni User's Location</MapTitle>
                      <TitleStar size={24} color="#81929d" />
                      <MapActions>
                        <MdShare size={30} />
                        <Fullscreen />
                      </MapActions>
                    </MapBar>
                    <MapArt />
                    <ZoomBox><span>+</span></ZoomBox>
                  </MapFrame>
                </Lower>
              </Content>
            </Body>
          </Page>
          <Scrollbar>
            <ScrollUp><TinyChevron up /></ScrollUp>
            <ScrollThumb />
            <ScrollDown><TinyChevron /></ScrollDown>
          </Scrollbar>
        </Viewport>
      </Main>
      <Dialog>
        <DialogTitle>best.tecnico.ulisboa.pt says</DialogTitle>
        <DialogText>User Ana Ventura is in distress. Send help to her location</DialogText>
        <SnipTip>Window Snip</SnipTip>
        <OkButton>OK</OkButton>
      </Dialog>
    </Shell>
  );
}
